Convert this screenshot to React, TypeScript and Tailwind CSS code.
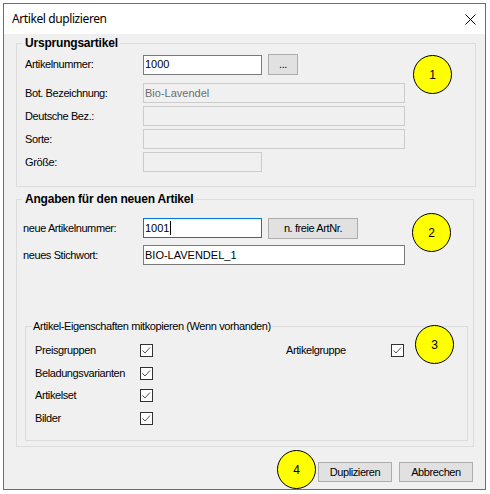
import React from 'react';

const TextBox = ({ w, value, disabled, focused }: { w: string; value?: string; disabled?: boolean; focused?: boolean }) => {
  let cls = 'bg-white border-[#7a7a7a] text-black';
  if (disabled) cls = 'bg-[#f0f0f0] border-[#cccccc] text-[#6d6d6d]';
  if (focused) cls = 'bg-white border-[#0078d7] text-black';
  return (
    <div className={`${w} h-[20px] border ${cls} flex items-center pl-[1px] tracking-normal whitespace-nowrap`}>
      {value}
      {focused && <span className="inline-block w-px h-[14px] bg-black ml-[1px]" />}
    </div>
  );
};

const Btn = ({ w, h = 'h-[20px]', children }: { w: string; h?: string; children: React.ReactNode }) => (
  <div className={`${w} ${h} bg-[#e1e1e1] border border-[#adadad] flex items-center justify-center`}>{children}</div>
);

const Check = () => (
  <div className="w-[13px] h-[13px] border border-[#333333] bg-white">
    <svg width="11" height="11" viewBox="0 0 11 11">
      <polyline points="1.5,5.5 4,8 9,2.5" fill="none" stroke="#555555" strokeWidth="1" />
    </svg>
  </div>
);

const Marker = ({ pos, n }: { pos: string; n: string }) => (
  <div className={`absolute ${pos} w-[39px] h-[39px] rounded-full bg-[#ffff00] border border-black flex items-center justify-center text-[12px] tracking-normal`}>
    {n}
  </div>
);

export default function App() {
  return (
    <div className="relative w-[490px] h-[494px] bg-white pl-[3px] pt-[3px] font-['Liberation_Sans',Arial,sans-serif] text-[11px] tracking-[-0.4px] text-black">
      <div className="flex flex-col w-[483px] h-[487px] border border-[#1883d7]">
        {/* title bar */}
        <div className="h-[30px] bg-white flex items-center justify-between pl-[8px] pr-[9px]">
          <span className="font-['Noto_Sans',sans-serif] text-[12px] tracking-[-0.4px]">Artikel duplizieren</span>
          <svg width="11" height="11" viewBox="0 0 11 11">
            <path d="M0.5 0.5L10.5 10.5M10.5 0.5L0.5 10.5" stroke="#000" strokeWidth="1" />
          </svg>
        </div>

        <div className="flex-1 bg-[#f0f0f0] flex flex-col">
          {/* Ursprungsartikel */}
          <fieldset className="mt-[2px] ml-[12px] w-[460px] border border-[#dcdcdc] pb-[14px]">
            <legend className="ml-[5px] pl-[3px] pr-[2px] text-[12px] leading-[14px] font-bold tracking-[-0.2px]">Ursprungsartikel</legend>
            <div className="pl-[8px]">
              <div className="flex items-center h-[21px] mt-[4px]">
                <span className="w-[118px]">Artikelnummer:</span>
                <TextBox w="w-[119px]" value="1000" />
                <div className="ml-[6px]"><Btn w="w-[30px]" h="h-[21px]">...</Btn></div>
              </div>
              <div className="flex items-center h-[20px] mt-[8px]">
                <span className="w-[118px]">Bot. Bezeichnung:</span>
                <TextBox w="w-[262px]" value="Bio-Lavendel" disabled />
              </div>
              <div className="flex items-center h-[20px] mt-[3px]">
                <span className="w-[118px]">Deutsche Bez.:</span>
                <TextBox w="w-[262px]" disabled />
              </div>
              <div className="flex items-center h-[20px] mt-[3px]">
                <span className="w-[118px]">Sorte:</span>
                <TextBox w="w-[262px]" disabled />
              </div>
              <div className="flex items-center h-[20px] mt-[3px]">
                <span className="w-[118px]">Größe:</span>
                <TextBox w="w-[119px]" disabled />
              </div>
            </div>
          </fieldset>

          {/* Angaben für den neuen Artikel */}
          <fieldset className="mt-[5px] ml-[12px] w-[458px] border border-[#dcdcdc] pb-[5px]">
            <legend className="ml-[5px] pl-[3px] pr-[2px] text-[12px] leading-[14px] font-bold tracking-[-0.2px]">Angaben für den neuen Artikel</legend>
            <div className="flex items-start h-[21px] mt-[12px] pl-[6px]">
              <span className="w-[120px] h-[20px] flex items-center">neue Artikelnummer:</span>
              <TextBox w="w-[119px]" value="1001" focused />
              <div className="ml-[6px]"><Btn w="w-[90px]" h="h-[21px]">n. freie ArtNr.</Btn></div>
            </div>
            <div className="flex items-center h-[20px] mt-[6px] pl-[6px]">
              <span className="w-[120px]">neues Stichwort:</span>
              <TextBox w="w-[262px]" value="BIO-LAVENDEL_1" />
            </div>

            <fieldset className="mt-[55px] ml-[8px] w-[443px] border border-[#dcdcdc] pb-[11px]">
              <legend className="ml-[6px] px-[1px] leading-[13px]">Artikel-Eigenschaften mitkopieren (Wenn vorhanden)</legend>
              <div className="pl-[9px] mt-[6px]">
                <div className="flex items-center h-[23px]">
                  <span className="w-[105px]">Preisgruppen</span>
                  <Check />
                  <span className="ml-[133px] w-[105px]">Artikelgruppe</span>
                  <Check />
                </div>
                <div className="flex items-center h-[22px]">
                  <span className="w-[105px]">Beladungsvarianten</span>
                  <Check />
                </div>
                <div className="flex items-center h-[23px]">
                  <span className="w-[105px]">Artikelset</span>
                  <Check />
                </div>
                <div className="flex items-center h-[22px]">
                  <span className="w-[105px]">Bilder</span>
                  <Check />
                </div>
              </div>
            </fieldset>
          </fieldset>

          <div className="flex justify-end gap-[7px] pr-[12px] mt-[15px]">
            <Btn w="w-[74px]">Duplizieren</Btn>
            <Btn w="w-[74px]">Abbrechen</Btn>
          </div>
        </div>
      </div>

      <Marker pos="left-[413px] top-[55px]" n="1" />
      <Marker pos="left-[412px] top-[213px]" n="2" />
      <Marker pos="left-[415px] top-[325px]" n="3" />
      <Marker pos="left-[277px] top-[450px]" n="4" />
    </div>
  );
}
